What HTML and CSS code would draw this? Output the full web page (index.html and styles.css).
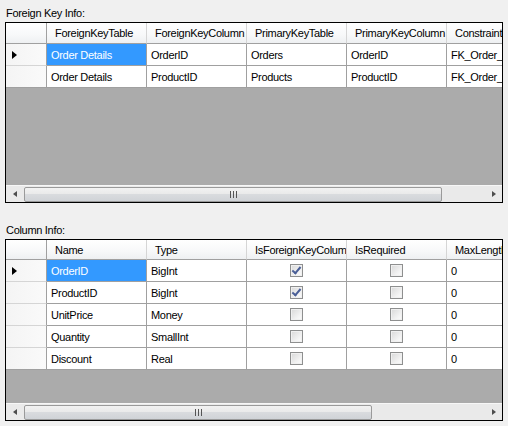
FILE: index.html
```html
<!DOCTYPE html>
<html lang="en">
<head>
    <meta charset="UTF-8">
    <title>Schema Info</title>
    <link rel="stylesheet" href="styles.css">
</head>
<body>
    <div class="section first">
        <div class="caption">Foreign Key Info:</div>
        <div class="grid">
            <div class="viewport">
                <div class="rows">
                    <div class="row head">
                        <div class="cell corner"></div>
                        <div class="cell">ForeignKeyTable</div>
                        <div class="cell">ForeignKeyColumn</div>
                        <div class="cell">PrimaryKeyTable</div>
                        <div class="cell">PrimaryKeyColumn</div>
                        <div class="cell">Constraint</div>
                    </div>
                    <div class="row">
                        <div class="cell rowhead current"><span class="arrow"></span></div>
                        <div class="cell selected">Order Details</div>
                        <div class="cell">OrderID</div>
                        <div class="cell">Orders</div>
                        <div class="cell">OrderID</div>
                        <div class="cell">FK_Order_Details_Orders</div>
                    </div>
                    <div class="row">
                        <div class="cell rowhead"></div>
                        <div class="cell">Order Details</div>
                        <div class="cell">ProductID</div>
                        <div class="cell">Products</div>
                        <div class="cell">ProductID</div>
                        <div class="cell">FK_Order_Details_Products</div>
                    </div>
                </div>
            </div>
            <div class="hscroll">
                <span class="btn left"></span>
                <div class="track">
                    <div class="thumb wide"><span class="grip"></span></div>
                </div>
                <span class="btn right"></span>
            </div>
        </div>
    </div>

    <div class="section second">
        <div class="caption">Column Info:</div>
        <div class="grid">
            <div class="viewport">
                <div class="rows">
                    <div class="row head short">
                        <div class="cell corner"></div>
                        <div class="cell">Name</div>
                        <div class="cell">Type</div>
                        <div class="cell">IsForeignKeyColumn</div>
                        <div class="cell">IsRequired</div>
                        <div class="cell">MaxLength</div>
                    </div>
                    <div class="row">
                        <div class="cell rowhead current"><span class="arrow"></span></div>
                        <div class="cell selected">OrderID</div>
                        <div class="cell">BigInt</div>
                        <div class="cell check"><span class="box on"></span></div>
                        <div class="cell check"><span class="box"></span></div>
                        <div class="cell">0</div>
                    </div>
                    <div class="row">
                        <div class="cell rowhead"></div>
                        <div class="cell">ProductID</div>
                        <div class="cell">BigInt</div>
                        <div class="cell check"><span class="box on"></span></div>
                        <div class="cell check"><span class="box"></span></div>
                        <div class="cell">0</div>
                    </div>
                    <div class="row">
                        <div class="cell rowhead"></div>
                        <div class="cell">UnitPrice</div>
                        <div class="cell">Money</div>
                        <div class="cell check"><span class="box"></span></div>
                        <div class="cell check"><span class="box"></span></div>
                        <div class="cell">0</div>
                    </div>
                    <div class="row">
                        <div class="cell rowhead"></div>
                        <div class="cell">Quantity</div>
                        <div class="cell">SmallInt</div>
                        <div class="cell check"><span class="box"></span></div>
                        <div class="cell check"><span class="box"></span></div>
                        <div class="cell">0</div>
                    </div>
                    <div class="row">
                        <div class="cell rowhead"></div>
                        <div class="cell">Discount</div>
                        <div class="cell">Real</div>
                        <div class="cell check"><span class="box"></span></div>
                        <div class="cell check"><span class="box"></span></div>
                        <div class="cell">0</div>
                    </div>
                </div>
            </div>
            <div class="hscroll">
                <span class="btn left"></span>
                <div class="track">
                    <div class="thumb narrow"><span class="grip"></span></div>
                </div>
                <span class="btn right"></span>
            </div>
        </div>
    </div>
</body>
</html>
```

FILE: styles.css
```css
* {
    box-sizing: border-box;
}
body {
    margin: 0;
    padding: 0 5px;
    background-color: #f0f0f0;
    font-family: "Liberation Sans", Arial, sans-serif;
    font-size: 11px;
    letter-spacing: -0.3px;
    color: #000;
}
.section.first {
    padding-top: 7px;
}
.section.second {
    margin-top: 21px;
}
.caption {
    height: 13px;
    line-height: 13px;
    margin-bottom: 2px;
    padding-left: 1px;
}
.grid {
    width: 498px;
    border: 1px solid #000;
    background-color: #ababab;
}
.viewport {
    height: 162px;
    overflow: hidden;
}
.second .viewport {
    height: 163px;
}
.rows {
    display: flex;
    flex-direction: column;
}
.row {
    display: grid;
    grid-template-columns: 41px repeat(5, 100px);
    height: 22px;
    background-color: #fff;
}
.row.head {
    height: 21px;
}
.row.head.short {
    height: 20px;
}
.cell {
    display: flex;
    align-items: center;
    padding: 0 4px;
    white-space: nowrap;
    overflow: hidden;
    border-right: 1px solid #a0a0a0;
    border-bottom: 1px solid #a0a0a0;
}
.head .cell {
    padding-left: 8px;
    background: linear-gradient(#ffffff, #f7f8f9 60%, #eef0f2);
    border-right: 1px solid #d5d5d5;
    border-bottom: 1px solid #a0a0a0;
}
.head .cell.corner {
    border-right: 1px solid #a0a0a0;
}
.rowhead {
    background: linear-gradient(90deg, #f4f4f4, #fafafa);
    border-bottom: 1px solid #d5d5d5;
}
.row:last-child .rowhead {
    border-bottom: 1px solid #a0a0a0;
}
.arrow {
    width: 0;
    height: 0;
    margin-left: 2px;
    border-top: 4.5px solid transparent;
    border-bottom: 4.5px solid transparent;
    border-left: 5px solid #000;
}
.selected {
    background-color: #3399ff;
    color: #fff;
}
.check {
    justify-content: center;
}
.box {
    width: 13px;
    height: 13px;
    border: 1px solid #8e8f8f;
    background: linear-gradient(135deg, #d8d8d8, #f4f4f4 70%, #fbfbfb);
    box-shadow: inset 0 0 0 1px #f0f0f0;
    position: relative;
}
.box.on::after {
    content: "";
    position: absolute;
    left: 3px;
    top: 0px;
    width: 3px;
    height: 7px;
    border-right: 2px solid #4a5f97;
    border-bottom: 2px solid #4a5f97;
    transform: rotate(40deg);
}
.hscroll {
    display: flex;
    align-items: center;
    height: 17px;
    background-color: #eaeaea;
    border-top: 1px solid #f7f7f7;
}
.btn {
    width: 17px;
    height: 16px;
    display: flex;
    align-items: center;
    justify-content: center;
    flex-shrink: 0;
}
.btn::before {
    content: "";
    width: 0;
    height: 0;
    border-top: 3.5px solid transparent;
    border-bottom: 3.5px solid transparent;
}
.btn.left::before {
    border-right: 4px solid #4d4d4d;
}
.btn.right::before {
    border-left: 4px solid #4d4d4d;
}
.track {
    flex: 1;
    height: 16px;
    display: flex;
    align-items: center;
}
.thumb {
    height: 15px;
    margin-left: 1px;
    border: 1px solid #9a9a9a;
    border-radius: 2px;
    background: linear-gradient(#f2f2f2, #eaeaea 45%, #d9dbde 50%, #d0d3d7);
    display: flex;
    align-items: center;
    justify-content: center;
}
.thumb.wide {
    width: 418px;
}
.thumb.narrow {
    width: 348px;
}
.grip {
    width: 7px;
    height: 7px;
    background: repeating-linear-gradient(90deg, #555 0 1px, transparent 1px 3px);
    margin-left: 1px;
}
```
